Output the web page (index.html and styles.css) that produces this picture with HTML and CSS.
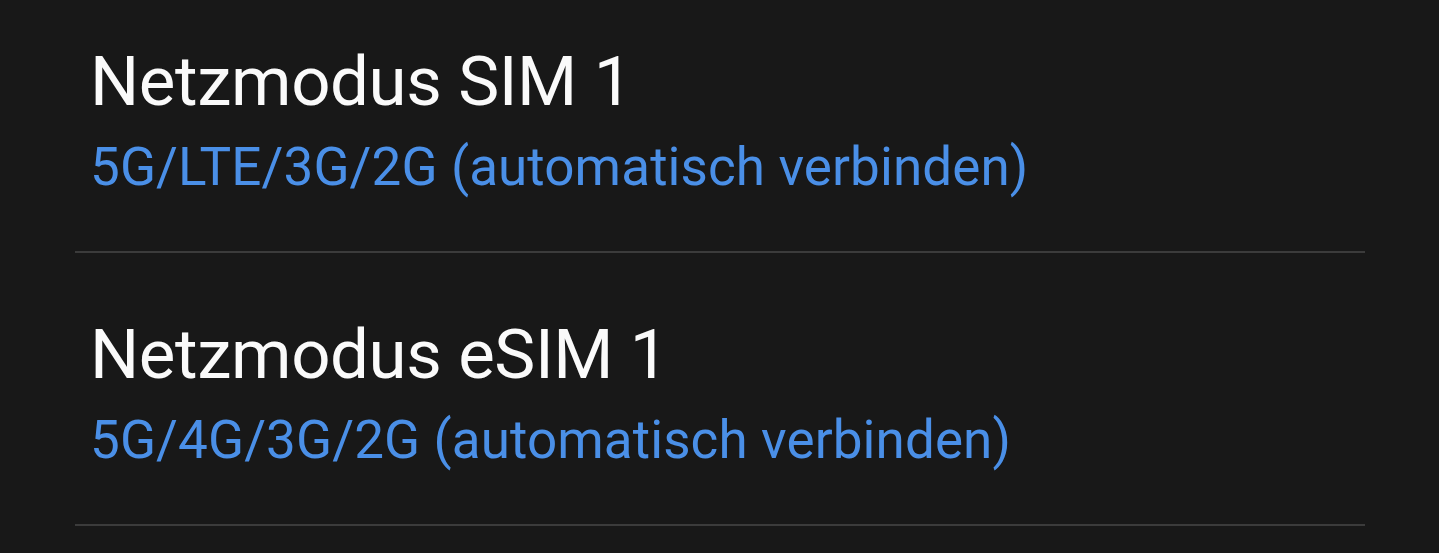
FILE: index.html
```html
<!DOCTYPE html>
<html lang="de">
<head>
    <meta charset="UTF-8">
    <meta name="viewport" content="width=device-width, initial-scale=1.0">
    <title>Mobile Netzwerke</title>
    <link rel="stylesheet" href="styles.css">
</head>
<body>
    <section class="settings-list">
        <div class="setting-item">
            <p class="setting-title">Netzmodus SIM 1</p>
            <p class="setting-value">5G/LTE/3G/2G (automatisch verbinden)</p>
        </div>
        <div class="setting-item">
            <p class="setting-title">Netzmodus eSIM 1</p>
            <p class="setting-value">5G/4G/3G/2G (automatisch verbinden)</p>
        </div>
    </section>
</body>
</html>
```

FILE: styles.css
```css
html, body {
    height: 100%;
}

body {
    font-family: Roboto, 'Noto Sans', sans-serif;
    margin: 0;
    padding: 0;
    background-color: #181818;
    color: #fafafa;
    overflow: hidden;
}

.settings-list {
    margin-top: -20px;
}

.setting-item {
    margin: 0 74px 0 75px;
    padding: 62px 0 51px 15px;
    border-bottom: 2px solid #3b3b3b;
}

.setting-title {
    margin: 0;
    font-size: 69px;
    line-height: 80px;
    letter-spacing: -0.4px;
    color: #fafafa;
}

.setting-value {
    margin: 12px 0 0;
    font-size: 53px;
    line-height: 66px;
    letter-spacing: 0.1px;
    color: #4a8fe7;
}
```
